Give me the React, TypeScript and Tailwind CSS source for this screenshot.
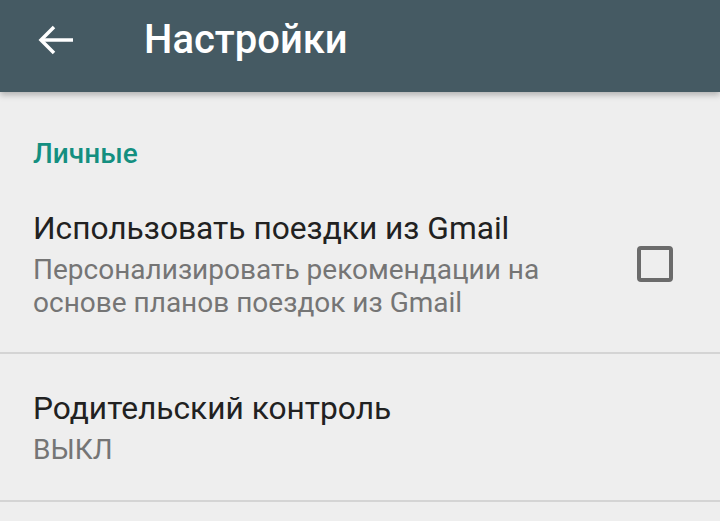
import React from 'react';

const BackArrow: React.FC = () => (
  <svg width="40" height="40" viewBox="0 0 40 40" fill="none">
    <path d="M5 20H37" stroke="#ffffff" strokeWidth="3.5" />
    <path d="M18 7L5 20L18 33" stroke="#ffffff" strokeWidth="3.5" strokeLinejoin="miter" />
  </svg>
);

const App: React.FC = () => {
  return (
    <div className="w-[720px] h-[521px] overflow-hidden bg-[#eeeeee] font-['Roboto',sans-serif]">
      <header className="relative z-10 h-[92px] pb-[13px] bg-[#455a63] flex items-center shadow-[0_3px_6px_rgba(0,0,0,0.25)]">
        <div className="pl-[36px] flex items-center">
          <BackArrow />
        </div>
        <h1 className="ml-[68px] text-[40px] font-medium text-white leading-[40px]">Настройки</h1>
      </header>

      <div className="pt-[48px] pl-[33px]">
        <h2 className="text-[28px] font-medium text-[#148f80] leading-[28px]">Личные</h2>
      </div>

      <div className="flex items-center pl-[33px] pr-[47px] pt-[41px] pb-[33px] border-b-2 border-[#d4d4d4]">
        <div className="flex-1">
          <p className="text-[31.7px] text-[#212121] leading-[40px]">Использовать поездки из Gmail</p>
          <p className="mt-[4px] text-[28px] text-[#757575] leading-[33px] w-[540px]">
            Персонализировать рекомендации на основе планов поездок из Gmail
          </p>
        </div>
        <div className="w-[36px] h-[36px] rounded-[4px] border-[4px] border-[#6b6b6b]" />
      </div>

      <div className="pl-[33px] pt-[35px] pb-[34px] border-b-2 border-[#d4d4d4]">
        <p className="text-[31.7px] text-[#212121] leading-[40px]">Родительский контроль</p>
        <p className="mt-[4px] text-[28px] text-[#757575] leading-[33px]">ВЫКЛ</p>
      </div>
    </div>
  );
};

export default App;
